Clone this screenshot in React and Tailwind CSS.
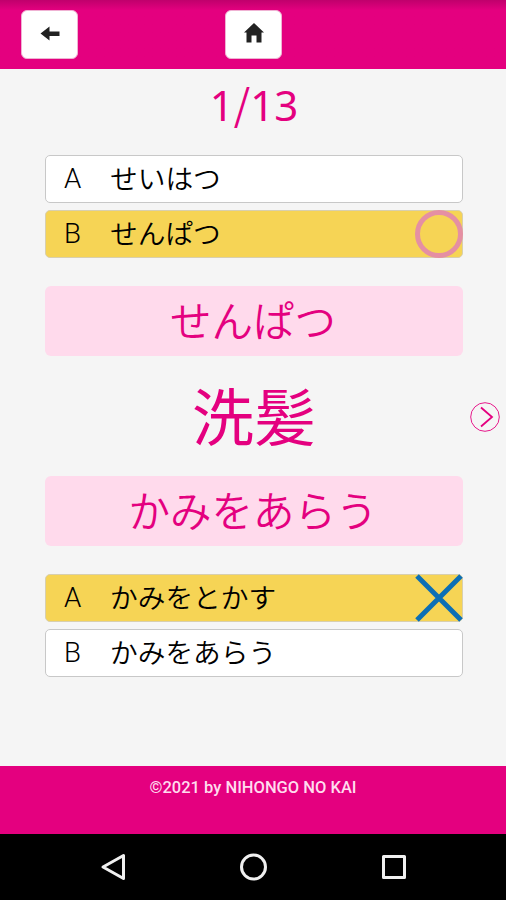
import React from 'react';

const BackIcon = () => (
    <svg viewBox="0 0 20 16" className="w-5 h-4 mb-0.5">
        <path d="M0.5 7.5 9.5 0.5V5.5H19.5V10H9.5V14.5Z" fill="#222" />
    </svg>
);

const HomeIcon = () => (
    <svg viewBox="0 0 20 20" className="w-5 h-5 mb-[3px]">
        <path d="M10 0 20 9.5H17.5V19.5H12.5V12.5H7.5V19.5H2.5V9.5H0Z" fill="#222" />
    </svg>
);

const Circle = () => (
    <svg viewBox="0 0 48 48" className="w-12 h-12">
        <circle cx="24" cy="24" r="21.5" fill="none" stroke="#e58fa3" strokeWidth="5" />
    </svg>
);

const Cross = () => (
    <svg viewBox="0 0 48 48" className="w-12 h-12">
        <path d="M2 2 46 46M46 2 2 46" fill="none" stroke="#0c6fb5" strokeWidth="5" />
    </svg>
);

const Choice = ({ letter, text, selected, mark }) => (
    <button
        type="button"
        className={`relative flex items-center w-full h-12 pl-[18px] rounded-[5px] border text-[27.7px] leading-none text-black ${
            selected ? 'bg-[#f6d455] border-[#d8cfae]' : 'bg-white border-[#c8c8c8]'
        }`}
    >
        <span className="w-[46px] text-left font-[350] font-['Roboto',sans-serif]">{letter}</span>
        <span className="relative -top-px font-[350]">{text}</span>
        {mark && <span className="absolute -right-px -top-px">{mark}</span>}
    </button>
);

const Reading = ({ children }) => (
    <div className="flex items-center justify-center h-[70px] pb-[3px] pr-0.5 rounded-md bg-[#ffdaec] text-[41.5px] leading-none font-[350] text-[#e4007f]">
        <span>{children}</span>
    </div>
);

const App = () => {
    return (
        <div className="flex flex-col w-[506px] h-[900px] overflow-hidden bg-[#f5f5f5] font-['Noto_Sans_CJK_JP',sans-serif]">
            {/* Header */}
            <header className="grid grid-cols-[57px_57px] gap-x-[147px] h-[69px] pl-[21px] pt-[10px] bg-linear-to-b from-[#c0006c] via-[#e4007f] via-15% to-[#e4007f]">
                <button type="button" className="flex items-center justify-center h-[49px] rounded-md bg-white border border-[#efb2d3]">
                    <BackIcon />
                </button>
                <button type="button" className="flex items-center justify-center h-[49px] rounded-md bg-white border border-[#efb2d3]">
                    <HomeIcon />
                </button>
            </header>

            {/* Question */}
            <main className="relative flex-1 pl-[45px] pr-[43px]">
                <h1 className="flex items-center justify-center h-[86px] pb-[14px] text-[42px] leading-none font-normal text-[#e4007f] font-['Noto_Sans',sans-serif]">
                    <span>1</span>
                    <span className="relative -top-[3px] font-['Noto_Sans_CJK_JP',sans-serif]">/</span>
                    <span>13</span>
                </h1>
                <div className="flex flex-col gap-[7px]">
                    <Choice letter="A" text="せいはつ" />
                    <Choice letter="B" text="せんぱつ" selected mark={<Circle />} />
                </div>
                <div className="mt-7">
                    <Reading>せんぱつ</Reading>
                </div>
                <div className="flex items-center justify-center h-[120px] pb-[5px] text-[62px] leading-none text-[#e4007f]">
                    <span>洗髪</span>
                </div>
                <Reading>かみをあらう</Reading>
                <div className="flex flex-col gap-[7px] mt-7">
                    <Choice letter="A" text="かみをとかす" selected mark={<Cross />} />
                    <Choice letter="B" text="かみをあらう" />
                </div>
                <button type="button" className="absolute right-[6px] top-[333px]">
                    <svg viewBox="0 0 30 30" className="w-[30px] h-[30px]" fill="none" stroke="#e4007f">
                        <circle cx="15" cy="15" r="14.3" strokeWidth="0.9" />
                        <path d="M11 5.5 22 15 11 24.5" strokeWidth="1.8" />
                    </svg>
                </button>
            </main>

            {/* Footer */}
            <footer className="h-[68px] pt-[12px] bg-[#e4007f] text-center text-[16.5px] leading-5 font-medium text-[#ffdcee] font-['Roboto',sans-serif]">
                ©2021 by NIHONGO NO KAI
            </footer>

            {/* Android navigation bar */}
            <nav className="h-[66px] bg-black">
                <svg viewBox="0 0 506 66" className="w-full h-full" fill="none" stroke="#f0f0f0" strokeWidth="3" strokeLinejoin="round">
                    <path d="M103 33 123.500 21.500V44.500Z" />
                    <circle cx="253.500" cy="33" r="12" />
                    <rect x="383.500" y="22.500" width="21" height="21" />
                </svg>
            </nav>
        </div>
    );
};

export default App;
